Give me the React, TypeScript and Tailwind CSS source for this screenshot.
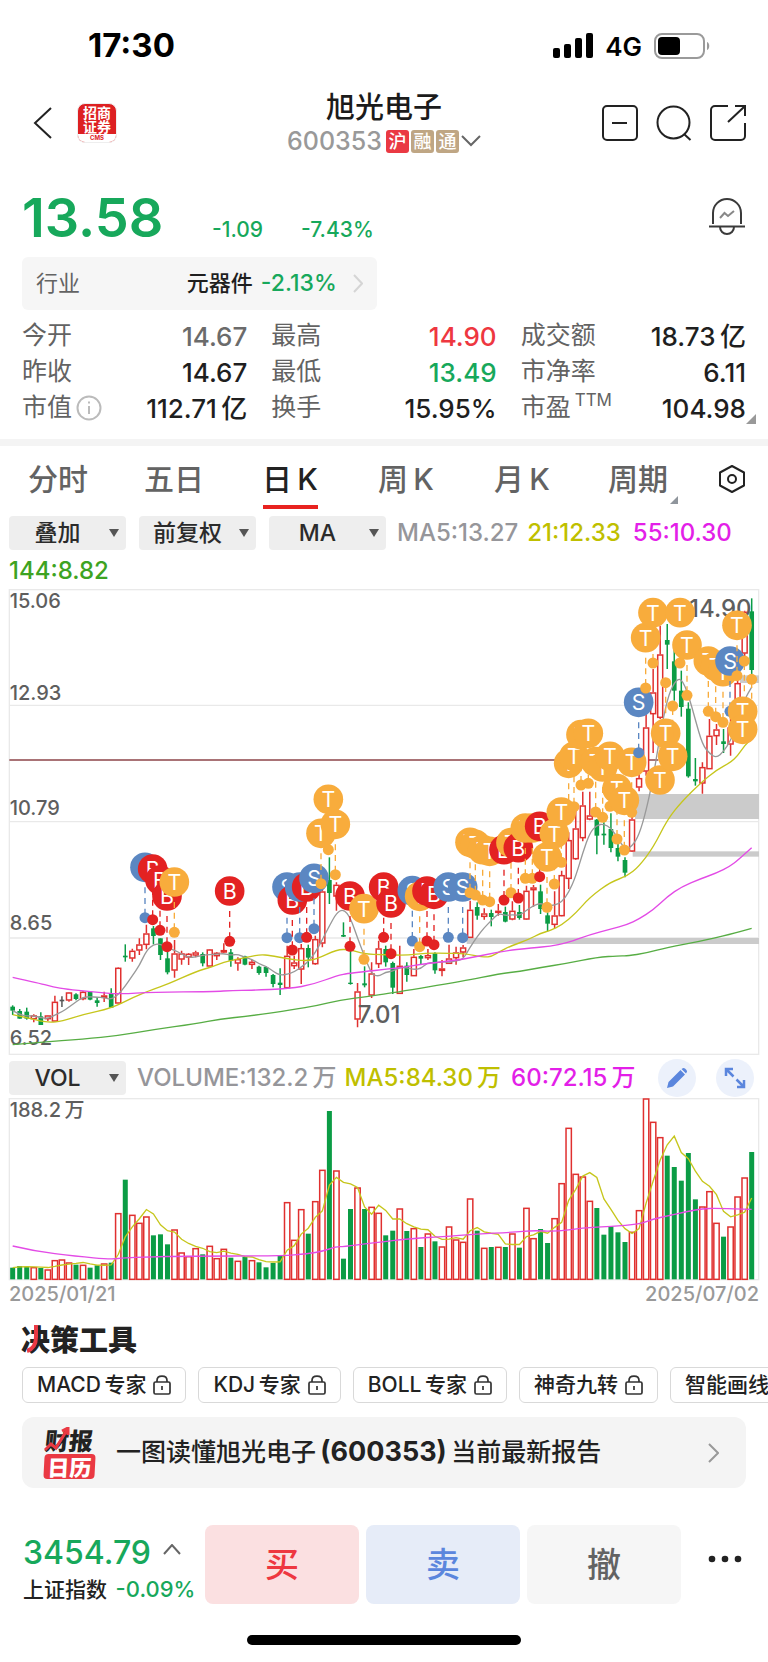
import React from 'react';

const UP = '#e0302f';
const DOWN = '#0b9c45';
const BLUE = '#5b87c2';
const RED = '#e32222';
const AMBER = '#f8ac3c';

/* ---------- chart data, in units of a third of a pixel ---------- */

type Candle = [kind: string, high: number, top: number, bottom: number, low: number];
type Point = [number, number];
type Marker = [kind: string, x: number, circleY: number, dotY: number, dotX?: number];

const columnX = (i: number) => 38 + 21.115 * i;

const lowerCandles = (dy: number, rows: Candle[]): Candle[] =>
  rows.map(([k, a, b, c, d]) => [k, a + dy, b + dy, c + dy, d + dy]);
const shiftPoints = (dx: number, dy: number, rows: Point[]): Point[] => rows.map(([x, y]) => [x + dx, y + dy]);
const shiftMarkers = (dx: number, dy: number, rows: Marker[]): Marker[] =>
  rows.map(([k, x, c, d, dotX]) => [k, x + dx, c + dy, d + dy, (dotX ?? x) + dx]);

const candles: Candle[] = [
  ...lowerCandles(570, [
    ['G', 679, 683, 695, 708], ['G', 690, 696, 719, 719], ['G', 686, 698, 719, 722], ['R', 706, 709, 720, 730],
    ['G', 700, 712, 738, 738], ['R', 708, 709, 720, 726], ['R', 650, 668, 727, 727], ['N', 652, 662, 667, 684],
    ['R', 639, 640, 664, 668], ['G', 643, 646, 660, 664], ['R', 636, 638, 660, 664], ['G', 638, 638, 662, 664],
    ['G', 654, 664, 672, 683], ['R', 638, 649, 656, 669], ['G', 628, 645, 686, 686], ['R', 565, 566, 673, 673],
    ['G', 496, 530, 535, 548], ['R', 509, 515, 538, 548], ['R', 478, 496, 514, 528], ['R', 437, 463, 497, 511],
    ['G', 441, 448, 471, 496], ['G', 478, 478, 528, 543], ['G', 508, 538, 580, 586], ['R', 483, 523, 574, 596],
    ['R', 515, 523, 541, 557], ['R', 522, 524, 535, 558], ['R', 515, 520, 529, 535], ['G', 520, 525, 553, 562],
    ['R', 510, 511, 562, 562], ['R', 519, 521, 531, 543], ['R', 493, 513, 520, 522], ['G', 510, 520, 545, 563],
    ['R', 535, 540, 553, 575], ['G', 530, 532, 557, 559], ['R', 543, 548, 557, 570], ['G', 560, 563, 582, 587],
  ]),
  ...lowerCandles(540, [
    ['G', 592, 594, 612, 623], ['G', 615, 618, 645, 655], ['G', 598, 641, 648, 678], ['R', 530, 560, 657, 660],
    ['R', 560, 580, 591, 600], ['R', 525, 537, 601, 645], ['G', 527, 537, 566, 595], ['R', 500, 510, 585, 587],
    ['R', 360, 367, 523, 535], ['G', 265, 333, 372, 405], ['R', 340, 347, 382, 425], ['G', 460, 498, 503, 504],
    ['G', 545, 641, 645, 647], ['R', 642, 667, 751, 775], ['G', 592, 643, 649, 655], ['R', 580, 613, 679, 687],
    ['R', 515, 538, 585, 597], ['G', 530, 540, 580, 593], ['G', 578, 582, 656, 675], ['R', 530, 590, 674, 674],
    ['G', 580, 590, 618, 638], ['R', 540, 563, 621, 621], ['G', 558, 561, 569, 585], ['R', 540, 558, 567, 573],
    ['G', 550, 553, 604, 614], ['R', 573, 598, 605, 622], ['R', 527, 568, 584, 584], ['R', 533, 550, 567, 587],
    ['R', 528, 535, 550, 565], ['R', 395, 422, 506, 506], ['G', 400, 414, 440, 452], ['R', 418, 433, 443, 452],
    ['G', 422, 432, 444, 472], ['R', 405, 425, 431, 440],
  ]),
  ...lowerCandles(570, [
    ['G', 383, 399, 428, 430], ['R', 367, 395, 421, 424], ['G', 378, 399, 417, 422], ['R', 320, 335, 421, 422],
    ['R', 318, 325, 333, 383], ['G', 317, 337, 390, 405], ['G', 400, 409, 434, 457], ['R', 337, 409, 437, 447],
    ['R', 275, 288, 411, 412], ['R', 160, 183, 299, 330], ['R', 90, 148, 240, 242], ['R', 38, 79, 177, 187],
    ['R', 38, 109, 121, 124], ['G', 120, 122, 170, 226], ['G', 130, 164, 169, 197], ['G', 103, 150, 207, 220],
    ['G', 195, 207, 233, 247], ['G', 235, 243, 281, 295], ['R', 85, 121, 217, 219],
  ]),
  ['R', 500, 567, 595, 607], ['R', 310, 415, 547, 560], ['R', 240, 310, 375, 492], ['R', 110, 196, 386, 390],
  ['G', 105, 153, 167, 240], ['G', 180, 217, 305, 335], ['G', 245, 305, 354, 383], ['G', 340, 359, 562, 566],
  ['G', 507, 570, 577, 590], ['R', 520, 534, 583, 614], ['R', 390, 440, 540, 540], ['R', 405, 421, 441, 468],
  ['G', 420, 457, 465, 492], ['R', 380, 415, 466, 500], ['R', 260, 282, 430, 430], ['R', 65, 68, 193, 210],
  ['G', 28, 67, 243, 265],
];

const ma21: Point[] = [
  ...shiftPoints(0, 570, [[38, 707], [90, 718], [120, 726], [150, 730], [185, 727], [250, 706], [333, 688], [400, 655], [460, 630], [500, 617], [587, 578], [640, 562], [670, 550], [714, 540]]),
  ...shiftPoints(750, 540, [[0, 563], [30, 557], [60, 559], [110, 569], [165, 576], [200, 570], [260, 542], [300, 541], [340, 555], [400, 557], [470, 559], [530, 552], [597, 553], [640, 553], [703, 565], [725, 562]]),
  ...shiftPoints(1500, 570, [[0, 517], [30, 502], [85, 482], [121, 463], [150, 455], [185, 438], [227, 403], [269, 355], [333, 308], [381, 292], [417, 262], [460, 205], [502, 122], [545, 68], [607, 7], [650, -27], [692, -50], [713, -70], [735, -102], [755, -120]]),
];
const ma55: Point[] = [
  ...shiftPoints(0, 570, [[38, 595], [120, 613], [160, 624], [200, 631], [270, 637], [355, 646], [460, 639], [640, 638], [700, 634]]),
  ...shiftPoints(750, 540, [[0, 664], [120, 659], [190, 646], [260, 620], [300, 612], [449, 597], [530, 583], [640, 572]]),
  ...shiftPoints(1500, 570, [[0, 517], [100, 506], [150, 502], [200, 492], [269, 467], [333, 450], [381, 437], [417, 420], [460, 392], [502, 353], [545, 323], [600, 300], [650, 282], [690, 262], [713, 244], [755, 206]]),
];
const ma144: Point[] = [
  ...shiftPoints(0, 570, [[38, 797], [120, 790], [250, 780], [355, 770], [460, 752], [587, 734], [660, 720]]),
  ...shiftPoints(750, 540, [[0, 741], [130, 722], [200, 710], [270, 693], [350, 683], [430, 671], [640, 636]]),
  ...shiftPoints(1500, 570, [[0, 584], [60, 577], [120, 566], [200, 553], [290, 535], [360, 530], [381, 531], [440, 522], [502, 505], [600, 487], [690, 466], [755, 448]]),
];

const markers: Marker[] = [
  ...shiftMarkers(0, 570, [
    ['S', 435, 265, 416], ['B', 458, 270, 422], ['B', 480, 303, 454], ['B', 501, 351, 503], ['T', 523, 309, 460], ['B', 689, 336, 487],
  ]),
  ...shiftMarkers(750, 540, [
    ['S', 111, 354, 506], ['B', 127, 393, 543], ['S', 149, 354, 506], ['B', 170, 354, 505], ['S', 192, 328, 479],
    ['T', 213, 193, 344], ['T', 235, 91, 242], ['T', 256, 166, 317], ['B', 300, 381, 532], ['T', 342, 419, 571],
    ['B', 401, 354, 505], ['B', 423, 402, 554], ['S', 487, 365, 516], ['T', 509, 382, 533], ['B', 531, 366, 516],
    ['B', 552, 376, 527], ['S', 595, 354, 505], ['S', 638, 354, 506], ['T', 660, 220, 371], ['T', 676, 226, 378],
    ['T', 698, 242, 393], ['T', 719, 247, 398],
  ]),
  ...shiftMarkers(1500, 570, [
    ['B', 12, 212, 363], ['T', 33, 191, 341], ['B', 55, 206, 357], ['T', 76, 147, 298], ['T', 97, 147, 298],
    ['B', 119, 142, 293], ['T', 141, 234, 385], ['T', 163, 164, 315], ['T', 184, 99, 250],
  ]),
  ...shiftMarkers(1500, 0, [
    ['T', 206, 523, 674], ['T', 222, 502, 653], ['T', 243, 437, 588], ['T', 265, 433, 583], ['T', 287, 518, 669],
    ['T', 308, 534, 685], ['T', 330, 502, 652], ['T', 351, 599, 750], ['T', 373, 634, 783], ['T', 395, 520, 670],
    ['S', 416, 340, 491], ['T', 437, 146, 297], ['T', 459, 71, 222], ['T', 480, 573, 424], ['T', 497, 433, 281],
    ['T', 518, 502, 351], ['T', 540, 71, 222], ['T', 561, 168, 319], ['T', 625, 216, 367], ['T', 647, 232, 383],
    ['T', 669, 248, 400], ['S', 690, 216, 367], ['T', 711, 109, 260], ['T', 728, 367, 216, 733], ['T', 728, 421, 271, 755],
  ]),
];

const volumeTops: number[] = [
  642, 637, 639, 641, 643, 648, 620, 618, 627, 633, 634, 642, 635, 630, 627, 479, 378, 484, 508, 489, 545, 542, 572, 528,
  597, 608, 584, 602, 577, 614, 586, 612, 622, 610, 620, 626, 641, 628, 606, 446, 559, 467, 540, 443, 349, 172, 351, 615,
  466, 402, 466, 460, 478, 545, 531, 465, 532, 524, 580, 540, 563, 579, 519, 558, 565, 435, 531, 583, 580, 580, 580, 540,
  582, 463, 554, 526, 568, 494, 389, 223, 361, 369, 442, 463, 543, 518, 536, 565, 535, 470, 135, 205, 251, 306, 340, 381,
  298, 437, 459, 413, 508, 549, 519, 429, 372, 295,
];
const volumeKinds =
  'GGGRGRRRRGRGGRGRGRRRGGGRRRRGRRRGRGRGGGGRRRGRRGRGGRGRRGGRGRGRGRRRRRGRGRGRGRRGGRRRRRRGGGGGRRRRRGGGGGRRRGRRRG';

const volumeMa60: Point[] = [
  [38, 577], [101, 592], [228, 608], [333, 617], [376, 612], [440, 610], [560, 607], [840, 607], [925, 600], [967, 593],
  [1009, 579], [1030, 579], [1115, 568], [1241, 554], [1325, 549], [1431, 541], [1537, 536], [1601, 530], [1664, 534],
  [1748, 523], [1833, 518], [1918, 512], [1960, 496], [2002, 487], [2065, 473], [2107, 465], [2150, 464], [2255, 467],
];

const average = (values: number[]) => values.reduce((a, b) => a + b, 0) / values.length;
const movingAverage = (values: number[]): Point[] =>
  values.map((_, i) => [columnX(i), average(values.slice(Math.max(0, i - 4), i + 1))]);
const toPoints = (points: Point[]) => points.map((p) => p.map((n) => n.toFixed(1)).join(',')).join(' ');

function smooth(points: Point[]) {
  let d = `M${points[0][0]} ${points[0][1]}`;
  for (let i = 1; i < points.length - 1; i++) {
    const [x, y] = points[i];
    const [nx, ny] = points[i + 1];
    d += ` Q${x} ${y} ${(x + nx) / 2} ${(y + ny) / 2}`;
  }
  const last = points[points.length - 1];
  return `${d} L${last[0]} ${last[1]}`;
}

const closes = candles.map(([kind, , top, bottom]) => (kind === 'R' ? top : bottom));

/* ---------- charts ---------- */

function CandleShape({ candle, x }: { candle: Candle; x: number }) {
  const [kind, high, top, bottom, low] = candle;
  if (kind === 'R') {
    return (
      <g stroke={UP} strokeWidth="4.500" fill="#fff">
        <path d={`M${x} ${high}V${top}M${x} ${bottom}V${low}`} />
        <rect x={x - 7.5} y={top + 2} width="15" height={Math.max(3, bottom - top - 3)} />
      </g>
    );
  }
  const color = kind === 'G' ? DOWN : '#555';
  return (
    <g stroke={color} fill={color}>
      <path d={`M${x} ${high}V${low}`} strokeWidth="4.500" />
      <rect x={x - 7} y={top} width="14" height={bottom - top} stroke="none" />
    </g>
  );
}

function MarkerShape({ marker }: { marker: Marker }) {
  const [kind, x, circleY, dotY, dotX = x] = marker;
  const color = kind === 'S' ? BLUE : kind === 'B' ? RED : AMBER;
  const start = dotY > circleY ? circleY + 60 : circleY - 60;
  return (
    <g>
      <path d={`M${dotX} ${start}V${dotY}`} stroke={color} strokeWidth="4" strokeDasharray="18 14" />
      <circle cx={dotX} cy={dotY} r="16.500" fill={color} />
      <circle cx={x} cy={circleY} r="44.500" fill={color} />
      <text x={x} y={circleY + 24} fontSize="64" fill="#fff" textAnchor="middle">{kind}</text>
    </g>
  );
}

function PriceChart() {
  return (
    <svg viewBox="0 -3 2304 1404" className="block w-full" role="img" aria-label="日K">
      <g fill="none" stroke="#e9e9e9" strokeWidth="4">
        <rect x="28" y="2" width="2248" height="1394" />
        <path d="M28 349H2276M28 698H2276M28 1047H2276" />
      </g>
      <g fill="#cbcbcb">
        <rect x="1905" y="615" width="372" height="75" />
        <rect x="1898" y="787" width="379" height="16" />
        <rect x="1400" y="1047" width="877" height="18" />
        <rect x="2220" y="259" width="57" height="23" />
      </g>
      <path d="M28 513H1975" stroke="#8c4448" strokeWidth="5" />
      <g fontSize="60" fontWeight="500" fill="#5e5e5e">
        <text x="29" y="58">15.06</text>
        <text x="29" y="333">12.93</text>
        <text x="29" y="679">10.79</text>
        <text x="29" y="1023">8.65</text>
        <text x="29" y="1367">6.52</text>
      </g>
      {candles.map((c, i) => (
        <CandleShape key={i} candle={c} x={columnX(i)} />
      ))}
      <g fill="none" strokeWidth="4" strokeLinejoin="round">
        <path d={smooth(movingAverage(closes))} stroke="#999" />
        <path d={smooth(ma21)} stroke="#c6c61c" />
        <path d={smooth(ma55)} stroke="#e34be6" />
        <path d={smooth(ma144)} stroke="#57ad44" />
      </g>
      <g fontSize="72" fontWeight="500" fill="#5e5e5e">
        <text x="2067" y="85">14.90</text>
        <text x="1073" y="1303">7.01</text>
      </g>
      {markers.map((m, i) => (
        <MarkerShape key={i} marker={m} />
      ))}
    </svg>
  );
}

function VolumeChart() {
  return (
    <svg viewBox="0 130 2304 552" className="block w-full" role="img" aria-label="VOL">
      <rect x="28" y="135" width="2248" height="543" fill="none" stroke="#e9e9e9" strokeWidth="4" />
      <text x="29" y="191" fontSize="60" fontWeight="500" fill="#5e5e5e">188.2{'\u2009'}万</text>
      {volumeTops.map((top, i) =>
        volumeKinds[i] === 'R' ? (
          <rect key={i} x={columnX(i) - 8} y={top + 1} width="16" height={676 - top} fill="#fff" stroke={UP} strokeWidth="4.500" />
        ) : (
          <rect key={i} x={columnX(i) - 7.5} y={top} width="15" height={677 - top} fill={DOWN} />
        ),
      )}
      <g fill="none" strokeWidth="4">
        <polyline points={toPoints(movingAverage(volumeTops))} stroke="#c6c61c" />
        <path d={smooth(volumeMa60)} stroke="#e34be6" />
      </g>
    </svg>
  );
}

/* ---------- small drawings ---------- */

function Chevron({ className, d, box }: { className: string; d: string; box: string }) {
  return (
    <svg viewBox={box} className={className} fill="none" stroke="currentColor" strokeWidth="2" aria-hidden="true">
      <path d={d} />
    </svg>
  );
}

function LockIcon() {
  return (
    <svg viewBox="0 0 18 20" className="h-5 w-[18px]" fill="none" stroke="#333" strokeWidth="1.700" aria-hidden="true">
      <rect x="1" y="7" width="16" height="12" rx="1.500" />
      <path d="M4 7V5.500C4 3 6 1.200 9 1.200S14 3 14 5.500V7M9 11v4" />
    </svg>
  );
}

/* ---------- page sections ---------- */

function StatusBar() {
  return (
    <div className="flex h-[92px] items-center justify-between pr-[58px] pl-[88px] text-black">
      <span className="text-[33px] font-bold">17:30</span>
      <div className="flex items-center">
        <svg viewBox="0 0 40 26" className="h-[26px] w-10" aria-hidden="true">
          <rect x="0" y="15" width="7" height="10" rx="2" />
          <rect x="11" y="11" width="7" height="14" rx="2" />
          <rect x="22" y="5" width="7" height="20" rx="2" />
          <rect x="33" y="0" width="7" height="25" rx="2" />
        </svg>
        <span className="ml-3 text-[26px] font-semibold">4G</span>
        <svg viewBox="0 0 56 26" className="ml-3 h-[26px] w-14" aria-hidden="true">
          <rect x="1" y="1" width="49" height="24" rx="7" fill="none" stroke="#9a9a9a" strokeWidth="2" />
          <rect x="4" y="4" width="22" height="18" rx="4" />
          <path d="M53 9c3 1 3 7 0 8z" fill="#9a9a9a" />
        </svg>
      </div>
    </div>
  );
}

function Badge({ text, className }: { text: string; className: string }) {
  return (
    <span className={`flex h-[23px] w-[23px] items-center justify-center rounded-[3px] text-[18px] leading-[23px] font-medium text-white ${className}`}>{text}</span>
  );
}

function NavBar() {
  return (
    <header className="grid grid-cols-[1fr_auto_1fr] items-center px-[22px]">
      <div className="flex items-center gap-6 pl-[11px]">
        <button type="button" aria-label="返回">
          <Chevron className="h-[34px] w-5 text-[#222]" box="0 0 20 34" d="M18 2L2 17L18 32" />
        </button>
        <div className="flex h-10 w-10 flex-col overflow-hidden rounded-lg border border-[#eee] bg-[#dd2022] text-center text-white">
          <span className="h-[31px] pt-px font-['Noto_Sans_CJK_SC',sans-serif] text-[14px] leading-[14px] font-bold">
            招商<br />证券
          </span>
          <span className="h-2 bg-white text-[6px] leading-[7px] font-bold text-[#dd2022]">CMS</span>
        </div>
      </div>
      <div className="flex flex-col items-center gap-1">
        <h1 className="text-[29px] leading-8 font-medium text-[#1b1b1b]">旭光电子</h1>
        <div className="flex h-[26px] items-center gap-[2px]">
          <span className="mr-[2px] text-[25px] leading-[26px] font-medium text-[#999]">600353</span>
          <Badge text="沪" className="bg-[#ea3943]" />
          <Badge text="融" className="bg-[#bfa684]" />
          <Badge text="通" className="bg-[#bfa684]" />
          <Chevron className="h-3 w-5 text-[#666]" box="0 0 20 12" d="M1 1L10 10L19 1" />
        </div>
      </div>
      <div className="flex items-center justify-end gap-[18px] text-[#222]">
        <button type="button" aria-label="移除自选">
          <svg viewBox="0 0 36 36" className="h-9 w-9" fill="none" stroke="currentColor" strokeWidth="2">
            <rect x="1" y="1" width="34" height="34" rx="4" />
            <path d="M10 18h15" />
          </svg>
        </button>
        <button type="button" aria-label="搜索">
          <svg viewBox="0 0 36 36" className="h-9 w-9" fill="none" stroke="currentColor" strokeWidth="2">
            <circle cx="17.500" cy="17.500" r="16" />
            <path d="M28 29l6.500 6" />
          </svg>
        </button>
        <button type="button" aria-label="分享">
          <svg viewBox="0 0 36 36" className="h-9 w-9" fill="none" stroke="currentColor" strokeWidth="2">
            <path d="M18 1H5a4 4 0 0 0-4 4v26a4 4 0 0 0 4 4h26a4 4 0 0 0 4-4V18M18 17L34 2M25 1h10v10" />
          </svg>
        </button>
      </div>
    </header>
  );
}

function Stat({ label, value, tone = 'text-[#1f1f1f]', extra }: { label: string; value: string; tone?: string; extra?: React.ReactNode }) {
  return (
    <div className="flex h-9 items-center justify-between">
      <dt className="flex items-center text-[25px] text-[#636363]">
        {label}
        {extra}
      </dt>
      <dd className={`text-[26px] font-medium ${tone}`}>{value}</dd>
    </div>
  );
}

function Quote() {
  return (
    <section className="relative px-[22px] pt-[34px] pb-[13px]">
      <div className="flex items-start justify-between">
        <div className="flex items-baseline text-[21px] font-medium text-[#17a85b]">
          <span className="w-[190px] text-[54px] leading-[60px] font-semibold">13.58</span>
          <span className="w-[89px]">-1.09</span>
          <span>-7.43%</span>
        </div>
        <button type="button" aria-label="预警" className="mt-[10px]">
          <svg viewBox="0 0 38 38" className="h-[38px] w-[38px]" fill="none" stroke="#3a3a3a" strokeWidth="2">
            <path d="M5 26V15a14 14 0 0 1 28 0v11M1 28.500h36M12 29a7 7 0 0 0 14 0" />
            <path d="M12 20l4.500-5 3.500 3 6-5" stroke="#888" />
          </svg>
        </button>
      </div>
      <a href="#industry" className="mt-[9px] flex h-[53px] w-[49%] items-center rounded-md bg-[#f6f6f6] px-[14px] text-[22px]">
        <span className="flex-1 text-[#636363]">行业</span>
        <span className="font-medium text-[#1f1f1f]">元器件</span>
        <span className="ml-2 text-[23px] font-medium text-[#17a85b]">-2.13%</span>
        <Chevron className="ml-4 h-[19px] w-[10px] text-[#d5d5d5]" box="0 0 10 19" d="M1 1L9 9.500L1 18" />
      </a>
      <dl className="mt-2 grid grid-cols-3 gap-x-6">
        <Stat label="今开" value="14.67" tone="text-[#6b6b6b]" />
        <Stat label="最高" value="14.90" tone="text-[#ee3740]" />
        <Stat label="成交额" value={'18.73\u2009亿'} />
        <Stat label="昨收" value="14.67" />
        <Stat label="最低" value="13.49" tone="text-[#17a85b]" />
        <Stat label="市净率" value="6.11" />
        <Stat
          label="市值"
          value={'112.71\u2009亿'}
          extra={
            <svg viewBox="0 0 26 26" className="ml-1 h-[26px] w-[26px]" fill="none" stroke="#bbb" strokeWidth="2" aria-hidden="true">
              <circle cx="13" cy="13" r="11.500" />
              <path d="M13 11v8M13 6.500v2" />
            </svg>
          }
        />
        <Stat label="换手" value="15.95%" />
        <Stat label="市盈" value="104.98" extra={<sup className="ml-1 text-[17px] leading-4">TTM</sup>} />
      </dl>
      <svg viewBox="0 0 10 10" className="absolute right-3 bottom-[15px] h-[10px] w-[10px]" aria-hidden="true">
        <path d="M10 0V10H0z" fill="#999" />
      </svg>
    </section>
  );
}

const periods = ['分时', '五日', '日\u2009K', '周\u2009K', '月\u2009K', '周期'];
const currentPeriod = periods[2];

function PeriodTabs() {
  return (
    <nav className="grid h-[66px] grid-cols-[repeat(6,116fr)_72fr] text-[30px] text-[#636363]">
      {periods.map((p) => (
        <button key={p} type="button" className={`relative flex items-center justify-center font-medium ${p === currentPeriod ? 'text-[#222]' : ''}`}>
          {p}
          {p === currentPeriod && <span className="absolute bottom-[3px] h-1 w-[55px] bg-[#e8221f]" />}
          {p === '周期' && (
            <svg viewBox="0 0 8 8" className="absolute right-[18px] bottom-2 h-2 w-2" aria-hidden="true">
              <path d="M8 0V8H0z" fill="#8f959c" />
            </svg>
          )}
        </button>
      ))}
      <button type="button" aria-label="设置" className="flex items-center justify-center">
        <svg viewBox="0 0 28 28" className="h-7 w-7" fill="none" stroke="#222" strokeWidth="2">
          <path d="M14 1L26 7.500V20.500L14 27L2 20.500V7.500z" strokeLinejoin="round" />
          <circle cx="14" cy="14" r="4" />
        </svg>
      </button>
    </nav>
  );
}

function Picker({ label, value }: { label: string; value: string }) {
  return (
    <div className="relative h-[34px] w-[117px]">
      <select aria-label={label} className="h-full w-full appearance-none rounded bg-[#eee] pr-5 text-center text-[23px] leading-[34px] font-medium text-[#2b2b2b] [text-align-last:center]">
        <option>{value}</option>
      </select>
      <svg viewBox="0 0 10 8" className="pointer-events-none absolute top-[13px] right-[7px] h-2 w-[10px]" aria-hidden="true">
        <path d="M0 0H10L5 8z" fill="#555" />
      </svg>
    </div>
  );
}

function Tools() {
  const chips = ['MACD\u2009专家', 'KDJ\u2009专家', 'BOLL\u2009专家', '神奇九转', '智能画线'];
  return (
    <section className="pt-[14px] pl-[22px]">
      <h2 className="relative -ml-px w-fit font-['Noto_Sans_CJK_SC',sans-serif] text-[29px] leading-[34px] font-black text-[#222]">
        决策工具
        <svg viewBox="0 0 14 28" className="absolute top-1 left-[6px] h-7 w-[14px]" fill="none" stroke="#ea3943" strokeWidth="4" aria-hidden="true">
          <path d="M9 0V12C9 20 6 24 0 26" />
        </svg>
      </h2>
      <div className="mt-3 flex gap-3 overflow-hidden">
        {chips.map((c) => (
          <button key={c} type="button" className="flex h-9 shrink-0 items-center gap-[7px] rounded-md border border-[#d9d9d9] px-[14px] text-[21px] font-medium whitespace-nowrap text-[#222]">
            {c}
            <LockIcon />
          </button>
        ))}
      </div>
      <a href="#report" className="mt-[14px] mr-[22px] flex h-[71px] items-center rounded-xl bg-[#f4f4f4] pr-[27px] pl-5 text-[#222]">
        <span className="relative flex w-[54px] flex-col items-center gap-[2px] font-['Noto_Sans_CJK_SC',sans-serif] text-[24px] leading-[25px] font-black">
          <span className="-skew-x-6">财报</span>
          <span className="w-[51px] -skew-x-3 rounded bg-[#ea3943] text-center text-[22px] text-white">日历</span>
          <svg viewBox="0 0 26 26" className="absolute top-0 left-[2px] h-[26px] w-[26px]" fill="none" stroke="#ea3943" strokeWidth="3" aria-hidden="true">
            <path d="M1 23L7 17L12 21L23 3M18 4L24 1L24 8" />
          </svg>
        </span>
        <span className="ml-5 flex-1 text-[25px] font-medium whitespace-nowrap">
          一图读懂旭光电子{'\u2009'}
          <b className="text-[27px] font-bold">(600353)</b>
          {'\u2009'}当前最新报告
        </span>
        <Chevron className="h-5 w-[11px] text-[#999]" box="0 0 11 20" d="M1 1L10 10L1 19" />
      </a>
    </section>
  );
}

function BottomBar() {
  const action = 'h-[79px] flex-1 rounded-lg text-[34px] font-medium';
  return (
    <footer className="flex items-center pt-[37px] pl-[23px]">
      <div className="w-[182px] shrink-0 pt-[10px] whitespace-nowrap">
        <div className="flex items-center gap-3 text-[32px] leading-9 font-medium text-[#17a85b]">
          3454.79
          <Chevron className="mb-2 h-[11px] w-[18px] text-[#666]" box="0 0 18 11" d="M1 10L9 1L17 10" />
        </div>
        <div className="mt-1 text-[21px] leading-7 font-medium text-[#222]">
          上证指数 <span className="ml-[3px] text-[22px] text-[#17a85b]">-0.09%</span>
        </div>
      </div>
      <div className="flex flex-1 gap-[7px]">
        <button type="button" className={`${action} bg-[#fbe0e1] text-[#ee3740]`}>买</button>
        <button type="button" className={`${action} bg-[#e6ecf8] text-[#5b86dd]`}>卖</button>
        <button type="button" className={`${action} bg-[#f6f6f6] text-[#636363]`}>撤</button>
      </div>
      <button type="button" aria-label="更多" className="flex w-[87px] justify-center">
        <svg viewBox="0 0 34 8" className="mb-3 h-2 w-[34px]" fill="#222">
          <circle cx="4" cy="4" r="3.300" />
          <circle cx="17" cy="4" r="3.300" />
          <circle cx="30" cy="4" r="3.300" />
        </svg>
      </button>
    </footer>
  );
}

export default function App() {
  return (
    <main className="overflow-x-hidden bg-white font-['Inter','Noto_Sans_CJK_SC',sans-serif]">
      <StatusBar />
      <NavBar />
      <Quote />
      <div className="h-[7px] bg-[#f4f4f4]" />
      <PeriodTabs />
      <div className="mt-1 flex flex-wrap items-center gap-y-1 pl-[9px] text-2xl leading-[34px] font-medium">
        <div className="mr-[11px] flex gap-[13px]">
          <Picker label="叠加" value="叠加" />
          <Picker label="复权" value="前复权" />
          <Picker label="指标" value="MA" />
        </div>
        <span className="mr-[9px] text-[#96969a]">MA5:13.27</span>
        <span className="mr-3 text-[#bfbf00]">21:12.33</span>
        <span className="text-[#e31fe8]">55:10.30</span>
        <span className="w-full text-[#3da322]">144:8.82</span>
      </div>
      <PriceChart />
      <div className="mt-[3px] flex items-center pr-[14px] pl-[9px] text-2xl leading-[34px] font-medium whitespace-nowrap">
        <Picker label="副图指标" value="VOL" />
        <span className="ml-[11px] text-[#96969a]">VOLUME:132.2{'\u2009'}万</span>
        <span className="ml-2 text-[#bfbf00]">MA5:84.30{'\u2009'}万</span>
        <span className="ml-[10px] flex-1 text-[#e31fe8]">60:72.15{'\u2009'}万</span>
        <button type="button" aria-label="画线" className="flex h-[38px] w-[38px] items-center justify-center rounded-full bg-[#ecf1fb]">
          <svg viewBox="0 0 22 22" className="h-[22px] w-[22px]" fill="#5b86dd">
            <path d="M1 21L2.500 15L14.500 3L19 7.500L7 19.500zM16 1.700Q17.500 0.300 19 1.500L20.500 3Q21.700 4.500 20.300 6L20 6.400L15.500 2z" />
          </svg>
        </button>
        <button type="button" aria-label="全屏" className="ml-5 flex h-[38px] w-[38px] items-center justify-center rounded-full bg-[#ecf1fb]">
          <svg viewBox="0 0 22 22" className="h-[22px] w-[22px]" fill="none" stroke="#5b86dd" strokeWidth="2.500">
            <path d="M9 2H2V9M2 2L9.500 9.500M13 20H20V13M20 20L12.500 12.500" />
          </svg>
        </button>
      </div>
      <VolumeChart />
      <div className="flex justify-between px-[9px] text-[20px] leading-[26px] font-medium text-[#999]">
        <span>2025/01/21</span>
        <span>2025/07/02</span>
      </div>
      <Tools />
      <BottomBar />
      <div className="mx-auto mt-[31px] mb-[14px] h-[10px] w-[274px] rounded-full bg-black" />
    </main>
  );
}
